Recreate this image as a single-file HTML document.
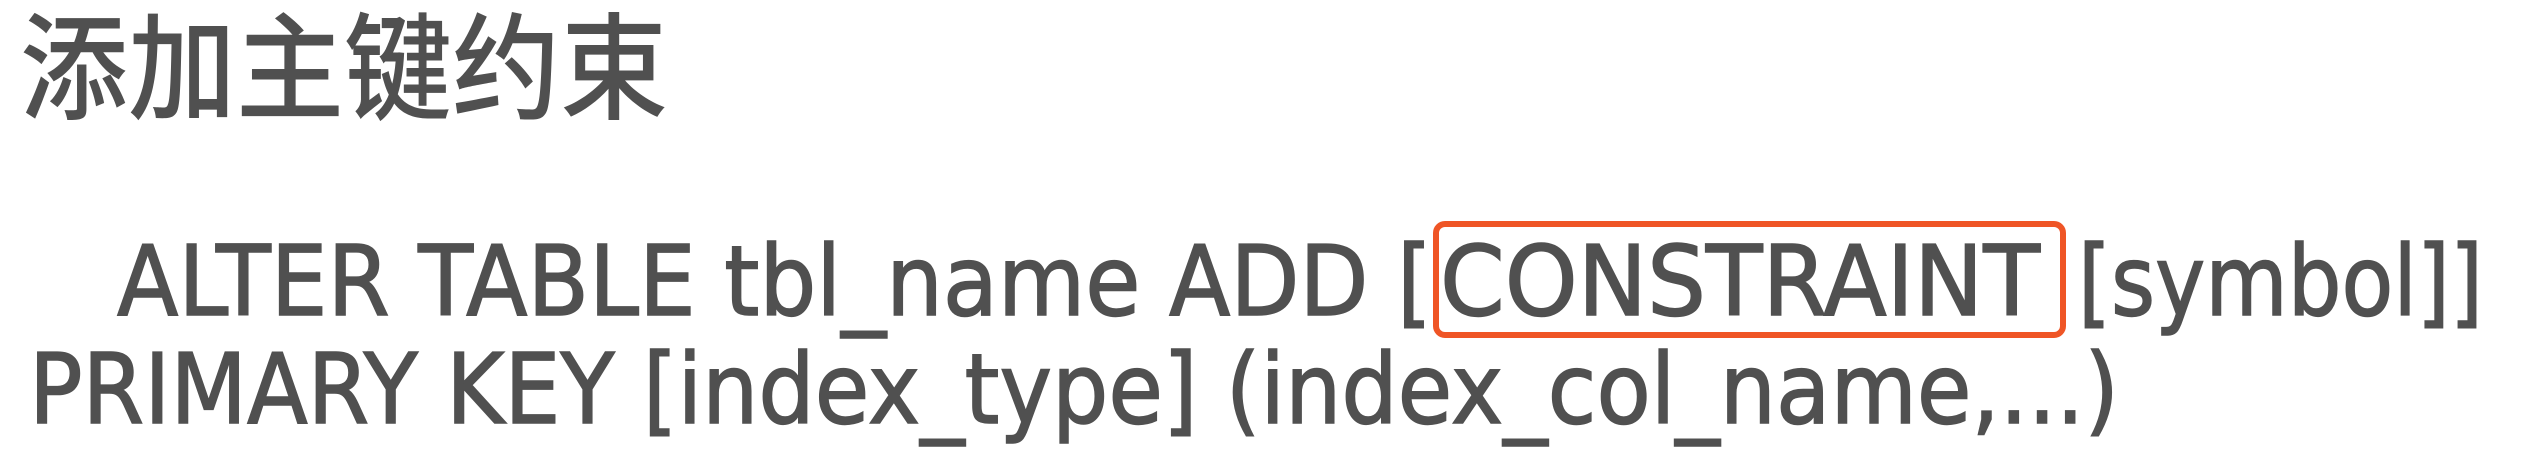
<!DOCTYPE html>
<html><head><meta charset="utf-8"><style>
html,body{margin:0;padding:0;background:#fff;width:2530px;height:474px;overflow:hidden}
svg{display:block}
</style></head><body>
<svg width="2530" height="474" viewBox="0 0 2530 474" xmlns="http://www.w3.org/2000/svg">
<text x="20" y="110" font-family="Noto Sans CJK SC, sans-serif" font-weight="500" font-size="116" fill="#505050" textLength="648" lengthAdjust="spacingAndGlyphs">添加主键约束</text>
<g font-family="DejaVu Sans, sans-serif" font-size="97" fill="#505050" stroke="#505050" stroke-width="1.5">
<text x="117" y="315" textLength="1315" lengthAdjust="spacingAndGlyphs">ALTER TABLE tbl_name ADD [</text>
<text x="1440" y="315" textLength="600" lengthAdjust="spacingAndGlyphs">CONSTRAINT</text>
<text x="2078" y="315" textLength="405" lengthAdjust="spacingAndGlyphs">[symbol]]</text>
<text x="29" y="423" textLength="2090" lengthAdjust="spacingAndGlyphs">PRIMARY KEY [index_type] (index_col_name,...)</text>
</g>
<rect x="1436" y="224" width="627" height="111" rx="9" ry="9" fill="none" stroke="#ef5526" stroke-width="6"/>
</svg>
</body></html>
